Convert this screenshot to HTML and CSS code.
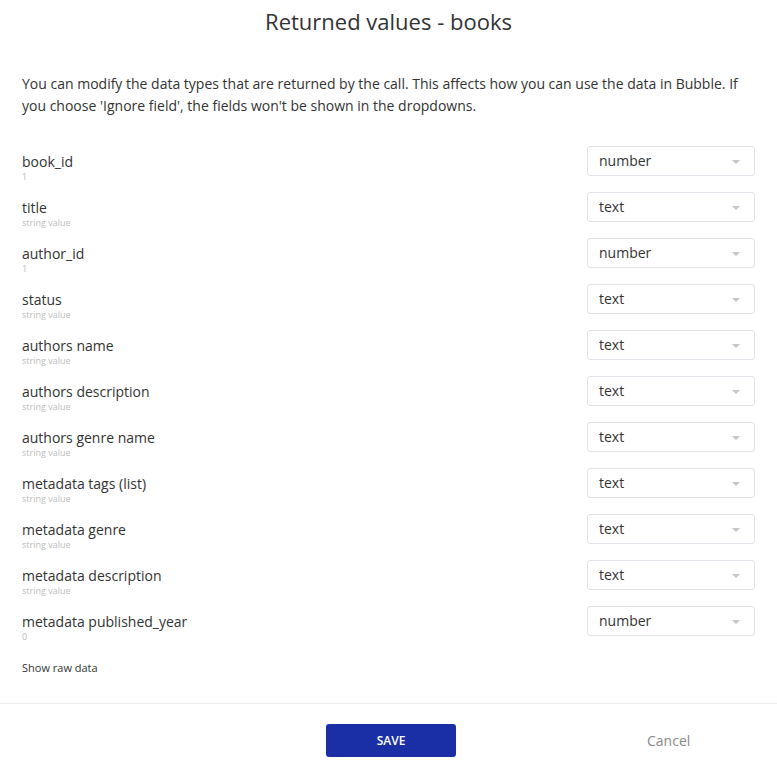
FILE: index.html
```html
<!doctype html>
<html lang="en">
<head>
  <meta charset="utf-8">
  <title>Returned values - books</title>
  <link rel="stylesheet" href="styles.css">
</head>
<body>
  <div class="popup">
    <div class="header">
      <h1>Returned values - books</h1>
    </div>
    <div class="content">
      <p class="intro">
        You can modify the data types that are returned by the call. This affects how you can use the data in Bubble. If you choose 'Ignore field', the fields won't be shown in the dropdowns.
      </p>
      <div class="fields">
        <div class="field">
          <div class="caption"><div class="name">book_id</div><div class="sample">1</div></div>
          <div class="dropdown">number</div>
        </div>
        <div class="field">
          <div class="caption"><div class="name">title</div><div class="sample">string value</div></div>
          <div class="dropdown">text</div>
        </div>
        <div class="field">
          <div class="caption"><div class="name">author_id</div><div class="sample">1</div></div>
          <div class="dropdown">number</div>
        </div>
        <div class="field">
          <div class="caption"><div class="name">status</div><div class="sample">string value</div></div>
          <div class="dropdown">text</div>
        </div>
        <div class="field">
          <div class="caption"><div class="name">authors name</div><div class="sample">string value</div></div>
          <div class="dropdown">text</div>
        </div>
        <div class="field">
          <div class="caption"><div class="name">authors description</div><div class="sample">string value</div></div>
          <div class="dropdown">text</div>
        </div>
        <div class="field">
          <div class="caption"><div class="name">authors genre name</div><div class="sample">string value</div></div>
          <div class="dropdown">text</div>
        </div>
        <div class="field">
          <div class="caption"><div class="name">metadata tags (list)</div><div class="sample">string value</div></div>
          <div class="dropdown">text</div>
        </div>
        <div class="field">
          <div class="caption"><div class="name">metadata genre</div><div class="sample">string value</div></div>
          <div class="dropdown">text</div>
        </div>
        <div class="field">
          <div class="caption"><div class="name">metadata description</div><div class="sample">string value</div></div>
          <div class="dropdown">text</div>
        </div>
        <div class="field">
          <div class="caption"><div class="name">metadata published_year</div><div class="sample">0</div></div>
          <div class="dropdown">number</div>
        </div>
      </div>
      <div class="raw">Show raw data</div>
    </div>
    <div class="footer">
      <button class="save">SAVE</button>
      <span class="cancel">Cancel</span>
    </div>
  </div>
</body>
</html>
```

FILE: styles.css
```css
body {
  margin: 0;
  background: #fff;
  font-family: "Open Sans", "Liberation Sans", sans-serif;
  color: #333;
}

.header {
  text-align: center;
  padding-top: 7px;
}

.header h1 {
  margin: 0;
  font-size: 22px;
  font-weight: 400;
  line-height: 28px;
  color: #333;
}

.content {
  padding: 0 22px;
}

.intro {
  margin: 38px 0 0;
  font-size: 14px;
  line-height: 22px;
  color: #333;
}

.fields {
  margin-top: 29px;
}

.field {
  display: flex;
  justify-content: space-between;
  height: 46px;
}

.caption {
  padding-top: 7px;
}

.name {
  font-size: 14px;
  line-height: 18px;
}

.sample {
  font-size: 9px;
  line-height: 11px;
  color: #bdbdbd;
}

.dropdown {
  position: relative;
  box-sizing: border-box;
  width: 168px;
  height: 30px;
  padding-left: 11px;
  border: 1px solid #e1e3e8;
  border-radius: 3px;
  font-size: 14px;
  line-height: 28px;
}

.dropdown::after {
  content: "";
  position: absolute;
  right: 14px;
  top: 13px;
  border-left: 4px solid transparent;
  border-right: 4px solid transparent;
  border-top: 4px solid #c3c7cf;
}

.raw {
  margin-top: 8px;
  font-size: 11px;
  line-height: 16px;
}

.footer {
  display: flex;
  align-items: center;
  gap: 191px;
  margin-top: 27px;
  padding: 20px 0 0 326px;
  border-top: 1px solid #eeeeee;
}

.save {
  width: 130px;
  height: 33px;
  border: 0;
  border-radius: 3px;
  background: #1a2fa6;
  color: #fff;
  font-family: inherit;
  font-size: 12px;
  font-weight: 600;
}

.cancel {
  font-size: 14px;
  color: #8a8a8a;
}
```
